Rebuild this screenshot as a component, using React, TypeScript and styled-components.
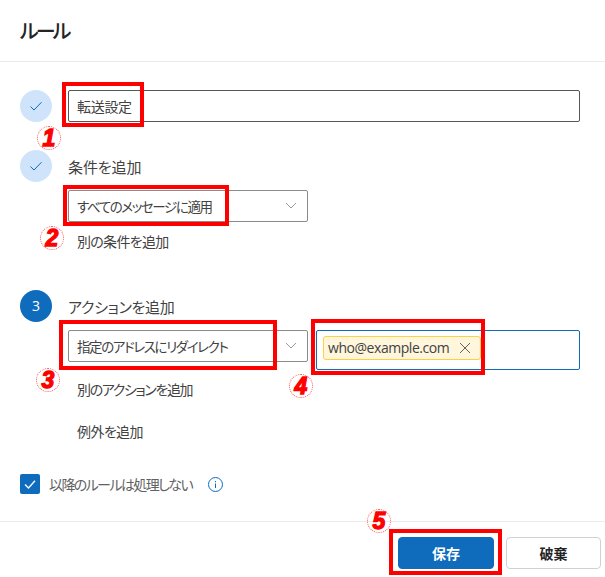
import React from "react";
import styled, { createGlobalStyle } from "styled-components";

const Global = createGlobalStyle`
  html, body { margin: 0; padding: 0; background: #fff; }
  body { font-family: "Open Sans", "Noto Sans CJK JP", sans-serif; color: #424242; }
`;

const jp = `
  font-family: "Noto Sans CJK JP", sans-serif;
  font-feature-settings: "palt" 1;
  font-size: 14px;
  line-height: 20px;
  font-weight: 400;
`;

const Dialog = styled.div`
  position: relative;
  width: 605px;
  height: 577px;
  overflow: hidden;
  display: flex;
  flex-direction: column;
`;
const Header = styled.header`
  height: 61px;
  box-sizing: content-box;
  border-bottom: 1px solid #ececec;
  padding-left: 20px;
  display: flex;
  align-items: center;
`;
const Title = styled.h1`
  margin: 0;
  font: 500 20px/28px "Noto Sans CJK JP", sans-serif;
  font-feature-settings: "palt" 1;
  letter-spacing: -2.9px;
  color: #242424;
`;
const Body = styled.main`
  flex: 1;
  padding: 28px 25px 0 20px;
  display: flex;
  flex-direction: column;
`;
const Step = styled.section<{ $gap?: number }>`
  display: grid;
  grid-template-columns: 32px 1fr;
  column-gap: 16px;
  margin-bottom: ${(p) => p.$gap ?? 0}px;
`;
const Badge = styled.div<{ $active?: boolean }>`
  width: 32px;
  height: 32px;
  border-radius: 50%;
  background: ${(p) => (p.$active ? "#0f6cbd" : "#cfe4fa")};
  color: #fff;
  font: 500 14px/32px "Open Sans", sans-serif;
  display: flex;
  align-items: center;
  justify-content: center;
`;
const StepContent = styled.div`
  min-width: 0;
`;
const Tight = styled.span<{ $ls: number; $size?: number }>`
  letter-spacing: ${(p) => p.$ls}px;
  font-size: ${(p) => p.$size ?? 14}px;
  white-space: nowrap;
`;
const StepLabel = styled.div`
  height: 32px;
  padding: 2px 0 0 0;
  box-sizing: border-box;
  display: flex;
  align-items: center;
  ${jp}
  color: #424242;
`;
const NameInput = styled.div`
  height: 32px;
  box-sizing: border-box;
  border: 1px solid #575757;
  border-radius: 2px;
  padding: 0 9px 0 8px;
  display: flex;
  align-items: center;
  ${jp}
  color: #424242;
`;
const FieldRow = styled.div`
  display: flex;
  align-items: flex-start;
  gap: 8px;
  margin-top: 8px;
`;
const Select = styled.div`
  width: 240px;
  height: 32px;
  box-sizing: border-box;
  border: 1px solid #8a8a8a;
  border-radius: 2px;
  padding: 0 10px 1px 8px;
  display: flex;
  align-items: center;
  justify-content: space-between;
  ${jp}
  color: #424242;
  white-space: nowrap;
  flex: none;
`;
const AddressInput = styled.div`
  width: 264px;
  height: 40px;
  box-sizing: border-box;
  border: 1px solid #0f6cbd;
  border-radius: 2px;
  padding: 5px 6px;
  display: flex;
  align-items: flex-start;
`;
const Chip = styled.div`
  width: 158px;
  height: 24px;
  box-sizing: border-box;
  background: #fff6dc;
  border: 1px solid #fdcf45;
  border-radius: 3px;
  padding: 0 9px 0 4px;
  display: flex;
  align-items: center;
  justify-content: space-between;
  font: 400 14px/20px "Open Sans", sans-serif;
  letter-spacing: -0.45px;
  color: #424242;
`;
const LinkRow = styled.div<{ $mt?: number }>`
  height: 40px;
  box-sizing: border-box;
  margin-top: ${(p) => p.$mt ?? 0}px;
  padding: 0 0 2px 9px;
  display: flex;
  align-items: center;
  ${jp}
  color: #424242;
`;
const CheckRow = styled.div`
  margin-top: 22px;
  display: flex;
  align-items: center;
  height: 20px;
  ${jp}
  color: #616161;
`;
const CheckBox = styled.div`
  width: 20px;
  height: 20px;
  border-radius: 2px;
  background: #0f6cbd;
  display: flex;
  align-items: center;
  justify-content: center;
  margin-right: 9px;
`;
const InfoWrap = styled.span`
  display: flex;
  margin-left: 16px;
`;
const Footer = styled.footer`
  height: 56px;
  box-sizing: border-box;
  border-top: 1px solid #ececec;
  padding: 15px 4px 0 0;
  display: flex;
  justify-content: flex-end;
  gap: 12px;
`;
const Btn = styled.button<{ $primary?: boolean }>`
  width: ${(p) => (p.$primary ? 96 : 95)}px;
  height: 32px;
  box-sizing: border-box;
  border-radius: 4px;
  border: 1px solid ${(p) => (p.$primary ? "#0f6cbd" : "#d1d1d1")};
  background: ${(p) => (p.$primary ? "#0f6cbd" : "#fff")};
  color: ${(p) => (p.$primary ? "#fff" : "#242424")};
  font: 600 14px/20px "Noto Sans CJK JP", sans-serif;
  padding: 0;
`;
const RedBox = styled.div<{ $x: number; $y: number; $w: number; $h: number }>`
  position: absolute;
  left: ${(p) => p.$x}px;
  top: ${(p) => p.$y}px;
  width: ${(p) => p.$w}px;
  height: ${(p) => p.$h}px;
  box-sizing: border-box;
  border: 4px solid #fe0000;
`;
const Marker = styled.div<{ $x: number; $y: number }>`
  position: absolute;
  left: ${(p) => p.$x}px;
  top: ${(p) => p.$y}px;
  width: 24px;
  height: 24px;
  box-sizing: border-box;
  border-radius: 50%;
  border: 1px dotted #ff5a5a;
  color: #fe0000;
  display: flex;
  align-items: center;
  justify-content: center;
  font: italic 700 23px/1 "Liberation Sans", sans-serif;
  -webkit-text-stroke: 1.3px #fe0000;
`;

const Check = () => (
  <svg width="14" height="14" viewBox="0 0 14 14" fill="none">
    <path d="M1.5 7.6 L5 11 L12.5 3.2" stroke="#0f6cbd" strokeWidth="1" />
  </svg>
);
const Chevron = () => (
  <svg width="12" height="7" viewBox="0 0 12 7" fill="none">
    <path d="M1 1 L6 6 L11 1" stroke="#9a9a9a" strokeWidth="1" />
  </svg>
);
const Close = () => (
  <svg width="12" height="12" viewBox="0 0 12 12" fill="none">
    <path d="M1 1 L11 11 M11 1 L1 11" stroke="#616161" strokeWidth="1" />
  </svg>
);
const Tick = () => (
  <svg width="14" height="14" viewBox="0 0 14 14" fill="none">
    <path d="M2 7.5 L5.5 11 L12 3.8" stroke="#fff" strokeWidth="1.3" />
  </svg>
);
const Info = () => (
  <svg width="15" height="15" viewBox="0 0 15 15" fill="none">
    <circle cx="7.5" cy="7.5" r="7" stroke="#0f6cbd" />
    <rect x="7" y="6.5" width="1" height="4.5" fill="#0f6cbd" />
    <rect x="7" y="4" width="1" height="1.2" fill="#0f6cbd" />
  </svg>
);

export default function App() {
  return (
    <Dialog>
      <Global />
      <Header>
        <Title>ルール</Title>
      </Header>
      <Body>
        <Step $gap={28}>
          <Badge><Check /></Badge>
          <StepContent>
            <NameInput><Tight $ls={-0.3}>転送設定</Tight></NameInput>
          </StepContent>
        </Step>
        <Step $gap={28}>
          <Badge><Check /></Badge>
          <StepContent>
            <StepLabel><Tight $ls={-0.1} $size={15}>条件を追加</Tight></StepLabel>
            <FieldRow>
              <Select><Tight $ls={-1.4} $size={13.5}>すべてのメッセージに適用</Tight><Chevron /></Select>
            </FieldRow>
            <LinkRow><Tight $ls={-0.7}>別の条件を追加</Tight></LinkRow>
          </StepContent>
        </Step>
        <Step>
          <Badge $active>3</Badge>
          <StepContent>
            <StepLabel><Tight $ls={-0.3} $size={15}>アクションを追加</Tight></StepLabel>
            <FieldRow>
              <Select><Tight $ls={-1.4} $size={13.5}>指定のアドレスにリダイレクト</Tight><Chevron /></Select>
              <AddressInput>
                <Chip>who@example.com<Close /></Chip>
              </AddressInput>
            </FieldRow>
            <LinkRow><Tight $ls={-1.4}>別のアクションを追加</Tight></LinkRow>
            <LinkRow $mt={2}><Tight $ls={-0.6}>例外を追加</Tight></LinkRow>
          </StepContent>
        </Step>
        <CheckRow>
          <CheckBox><Tick /></CheckBox>
          <Tight $ls={-1.6}>以降のルールは処理しない</Tight>
          <InfoWrap><Info /></InfoWrap>
        </CheckRow>
      </Body>
      <Footer>
        <Btn $primary>保存</Btn>
        <Btn>破棄</Btn>
      </Footer>
      <RedBox $x={62} $y={82} $w={82} $h={45} />
      <RedBox $x={63} $y={185} $w={166} $h={41} />
      <RedBox $x={59} $y={320} $w={218} $h={50} />
      <RedBox $x={311} $y={319} $w={174} $h={56} />
      <RedBox $x={389} $y={529} $w={113} $h={46} />
      <Marker $x={37} $y={126}>1</Marker>
      <Marker $x={40} $y={226}>2</Marker>
      <Marker $x={36} $y={368}>3</Marker>
      <Marker $x={289} $y={374}>4</Marker>
      <Marker $x={367} $y={509}>5</Marker>
    </Dialog>
  );
}
